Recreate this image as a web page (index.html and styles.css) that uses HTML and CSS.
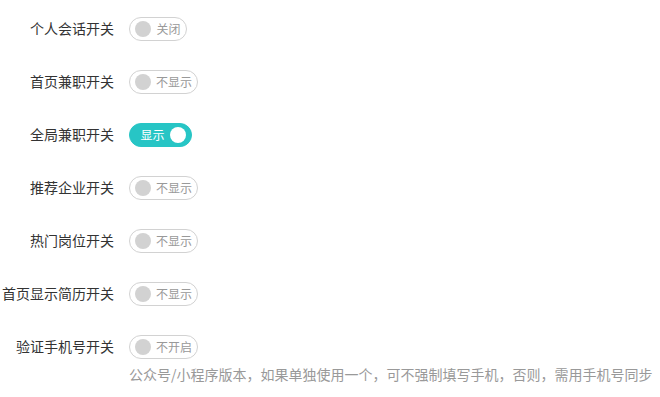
FILE: index.html
```html
<!DOCTYPE html>
<html lang="zh-CN">
<head>
    <meta charset="UTF-8">
    <title>开关设置</title>
    <link rel="stylesheet" href="styles.css">
</head>
<body>
    <form class="form">
        <div class="form-item">
            <label class="form-label">个人会话开关</label>
            <div class="input-block">
                <div class="switch"><i class="knob"></i><em>关闭</em></div>
            </div>
        </div>
        <div class="form-item">
            <label class="form-label">首页兼职开关</label>
            <div class="input-block">
                <div class="switch"><i class="knob"></i><em>不显示</em></div>
            </div>
        </div>
        <div class="form-item">
            <label class="form-label">全局兼职开关</label>
            <div class="input-block">
                <div class="switch on"><em>显示</em><i class="knob"></i></div>
            </div>
        </div>
        <div class="form-item">
            <label class="form-label">推荐企业开关</label>
            <div class="input-block">
                <div class="switch"><i class="knob"></i><em>不显示</em></div>
            </div>
        </div>
        <div class="form-item">
            <label class="form-label">热门岗位开关</label>
            <div class="input-block">
                <div class="switch"><i class="knob"></i><em>不显示</em></div>
            </div>
        </div>
        <div class="form-item">
            <label class="form-label">首页显示简历开关</label>
            <div class="input-block">
                <div class="switch"><i class="knob"></i><em>不显示</em></div>
            </div>
        </div>
        <div class="form-item">
            <label class="form-label">验证手机号开关</label>
            <div class="input-block">
                <div class="switch"><i class="knob"></i><em>不开启</em></div>
                <div class="word-aux">公众号/小程序版本，如果单独使用一个，可不强制填写手机，否则，需用手机号同步</div>
            </div>
        </div>
    </form>
</body>
</html>
```

FILE: styles.css
```css
body {
    margin: 0;
    font-family: "Noto Sans CJK SC", "Microsoft YaHei", sans-serif;
    font-size: 14px;
    color: #333;
    background: #fff;
}
.form {
    padding-top: 9px;
}
.form-item {
    display: flex;
    align-items: flex-start;
    margin-bottom: 15px;
    min-height: 38px;
}
.form-label {
    width: 114px;
    flex-shrink: 0;
    padding: 9px 0;
    line-height: 20px;
    text-align: right;
    white-space: nowrap;
}
.input-block {
    margin-left: 15px;
    padding-top: 8px;
}
.switch {
    display: inline-flex;
    align-items: center;
    height: 22px;
    padding: 0 5px;
    border: 1px solid #d2d2d2;
    border-radius: 20px;
    background: #fff;
    font-size: 12px;
    line-height: 22px;
}
.switch .knob {
    width: 16px;
    height: 16px;
    border-radius: 50%;
    background: #d2d2d2;
    margin-right: 5px;
}
.switch em {
    min-width: 25px;
    text-align: center;
    font-style: normal;
    color: #999;
}
.switch.on {
    border-color: #27c5c5;
    background: #27c5c5;
}
.switch.on em {
    color: #fff;
    margin-left: 5px;
    margin-right: 5px;
}
.switch.on .knob {
    background: #fff;
    margin-right: 0;
}
.word-aux {
    margin-top: 5px;
    line-height: 20px;
    color: #999;
    white-space: nowrap;
}
```
